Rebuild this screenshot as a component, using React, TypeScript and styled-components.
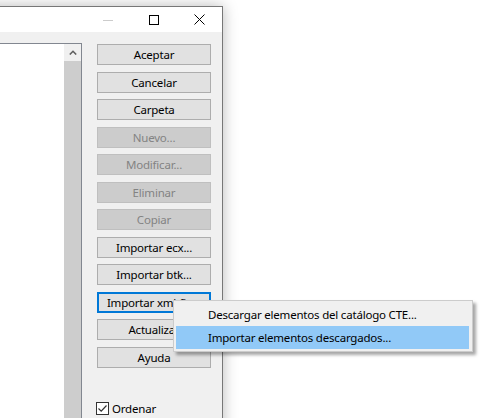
import styled, { createGlobalStyle } from 'styled-components'

const GlobalStyle = createGlobalStyle`
  html, body {
    margin: 0;
    padding: 0;
    background: #fff;
    overflow: hidden;
  }
  body {
    font-family: 'Segoe UI', 'Noto Sans', 'Liberation Sans', sans-serif;
    font-size: 11.5px;
    letter-spacing: -0.2px;
  }
`

const Desktop = styled.div`
  position: relative;
  width: 494px;
  height: 418px;
  overflow: hidden;
  background: #fff;
`

const Window = styled.div`
  position: absolute;
  left: -178px;
  top: 6px;
  width: 401px;
  height: 470px;
  box-sizing: border-box;
  display: flex;
  flex-direction: column;
  border: 1px solid #777;
  background: #f0f0f0;
  box-shadow: 0 0 14px rgba(0, 0, 0, 0.28);
`

const TitleBar = styled.div`
  height: 25px;
  flex: none;
  display: flex;
  justify-content: flex-end;
  background: #fff;
`

const CaptionButton = styled.div<{ $w: number }>`
  width: ${(p) => p.$w}px;
  display: flex;
  align-items: center;
  justify-content: center;
`

const Client = styled.div`
  flex: 1;
  display: flex;
  gap: 15px;
  padding: 11px 11px 0 0;
`

const ListBox = styled.div`
  flex: 1;
  display: flex;
  justify-content: flex-end;
  border: 1px solid #828790;
  background: #fff;
`

const ScrollBar = styled.div`
  width: 17px;
  display: flex;
  flex-direction: column;
`

const ScrollArrow = styled.div`
  height: 17px;
  display: flex;
  align-items: center;
  justify-content: center;
  background: #f0f0f0;
`

const ScrollThumb = styled.div`
  flex: 1;
  background: #cdcdcd;
`

const ButtonColumn = styled.div`
  width: 114px;
  display: flex;
  flex-direction: column;
  gap: 6.5px;
  padding-top: 1px;
`

const Button = styled.div<{ $disabled?: boolean; $focused?: boolean }>`
  height: 21px;
  box-sizing: border-box;
  display: flex;
  align-items: center;
  justify-content: center;
  white-space: nowrap;
  overflow: hidden;
  border: ${(p) =>
    p.$focused ? '2px solid #0078d7' : p.$disabled ? '1px solid #bfbfbf' : '1px solid #adadad'};
  background: ${(p) => (p.$disabled ? '#cccccc' : '#e1e1e1')};
  color: ${(p) => (p.$disabled ? '#838383' : '#000')};
`

const CheckRow = styled.div`
  display: flex;
  align-items: center;
  margin-top: 27px;
  margin-left: -1px;
`

const CheckBox = styled.div`
  width: 13px;
  height: 13px;
  box-sizing: border-box;
  border: 1px solid #333;
  background: #fff;
  display: flex;
  align-items: center;
  justify-content: center;
`

const CheckLabel = styled.span`
  margin-left: 3px;
  color: #000;
`

const PopupMenu = styled.div`
  position: absolute;
  left: 173px;
  top: 300px;
  width: 300px;
  box-sizing: border-box;
  padding: 2px 3px 2px 2px;
  border: 1px solid #ccc;
  background: #f0f0f0;
  box-shadow: 3px 3px 3px rgba(0, 0, 0, 0.35);
`

const MenuItem = styled.div<{ $active?: boolean }>`
  height: 23px;
  display: flex;
  align-items: center;
  padding-left: 32px;
  color: #000;
  background: ${(p) => (p.$active ? '#91c9f7' : 'transparent')};
`

const buttons = [
  { label: 'Aceptar' },
  { label: 'Cancelar' },
  { label: 'Carpeta' },
  { label: 'Nuevo...', disabled: true },
  { label: 'Modificar...', disabled: true },
  { label: 'Eliminar', disabled: true },
  { label: 'Copiar', disabled: true },
  { label: 'Importar ecx...' },
  { label: 'Importar btk...' },
  { label: 'Importar xml-fie...', focused: true },
  { label: 'Actualizar' },
  { label: 'Ayuda' },
]

const App = () => {
  return (
    <Desktop>
      <GlobalStyle />
      <Window>
        <TitleBar>
          <CaptionButton $w={46}>
            <svg width="10" height="10" viewBox="0 0 10 10">
              <line x1="0" y1="5.5" x2="10" y2="5.5" stroke="#cccccc" strokeWidth="1" />
            </svg>
          </CaptionButton>
          <CaptionButton $w={46}>
            <svg width="10" height="10" viewBox="0 0 10 10">
              <rect x="0.5" y="0.5" width="9" height="9" fill="none" stroke="#000" strokeWidth="1" />
            </svg>
          </CaptionButton>
          <CaptionButton $w={45}>
            <svg width="11" height="11" viewBox="0 0 11 11">
              <path d="M0.5 0.5 L10.5 10.5 M10.5 0.5 L0.5 10.5" stroke="#000" strokeWidth="1" />
            </svg>
          </CaptionButton>
        </TitleBar>
        <Client>
          <ListBox>
            <ScrollBar>
              <ScrollArrow>
                <svg width="8" height="5" viewBox="0 0 8 5">
                  <path d="M0.8 4.5 L4 1.3 L7.2 4.5" fill="none" stroke="#606060" strokeWidth="1.6" />
                </svg>
              </ScrollArrow>
              <ScrollThumb />
            </ScrollBar>
          </ListBox>
          <ButtonColumn>
            {buttons.map((b) => (
              <Button key={b.label} $disabled={b.disabled} $focused={b.focused}>
                {b.label}
              </Button>
            ))}
            <CheckRow>
              <CheckBox>
                <svg width="11" height="11" viewBox="0 0 11 11">
                  <path d="M1.5 5.5 L4.2 8.2 L9.5 2.5" fill="none" stroke="#333" strokeWidth="1.2" />
                </svg>
              </CheckBox>
              <CheckLabel>Ordenar</CheckLabel>
            </CheckRow>
          </ButtonColumn>
        </Client>
      </Window>
      <PopupMenu>
        <MenuItem>Descargar elementos del catálogo CTE...</MenuItem>
        <MenuItem $active>Importar elementos descargados...</MenuItem>
      </PopupMenu>
    </Desktop>
  )
}

export default App
